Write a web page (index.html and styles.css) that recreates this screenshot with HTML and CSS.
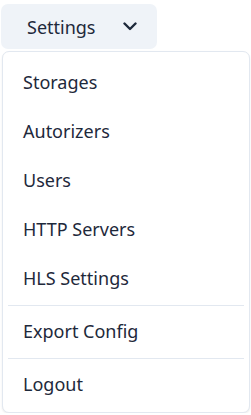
FILE: index.html
```html
<!DOCTYPE html>
<html lang="en">
<head>
    <meta charset="UTF-8">
    <meta name="viewport" content="width=device-width, initial-scale=1.0">
    <title>Settings</title>
    <link rel="stylesheet" href="styles.css">
</head>
<body>
    <div class="menu">
        <button class="menu-btn">
            <span>Settings</span>
            <svg class="chevron" width="14" height="9" viewBox="0 0 14 9" fill="none">
                <path d="M1.5 1.5 L7 7 L12.5 1.5" stroke="#1e293b" stroke-width="2.4" stroke-linecap="round" stroke-linejoin="round"/>
            </svg>
        </button>

        <div class="dropdown">
            <a class="item">Storages</a>
            <a class="item">Autorizers</a>
            <a class="item">Users</a>
            <a class="item">HTTP Servers</a>
            <a class="item">HLS Settings</a>
            <div class="divider"></div>
            <a class="item">Export Config</a>
            <div class="divider"></div>
            <a class="item">Logout</a>
        </div>
    </div>
</body>
</html>
```

FILE: styles.css
```css
body {
    margin: 0;
    font-family: "Noto Sans", "Open Sans", sans-serif;
    color: #1e293b;
    background: white;
}
.menu {
    padding: 4px 1px 0 1px;
}
.menu-btn {
    display: flex;
    align-items: center;
    gap: 27px;
    width: 156px;
    height: 45px;
    padding: 0 0 0 26px;
    border: none;
    border-radius: 7px;
    background: #eff3f8;
    font-family: inherit;
    font-size: 18px;
    color: #1e293b;
}
.chevron {
    display: block;
}
.dropdown {
    margin: 2px 0 0 1px;
    padding: 6px 5px 3px 5px;
    border: 1px solid #e2e8f0;
    border-radius: 7px;
    background: white;
    box-shadow: 0 1px 2px rgba(0,0,0,0.08);
}
.item {
    display: block;
    padding: 12px 15px;
    font-size: 18px;
    line-height: 25px;
    color: #1e293b;
}
.divider {
    height: 1px;
    margin: 1.5px 0;
    background: #e2e8f0;
}
```
